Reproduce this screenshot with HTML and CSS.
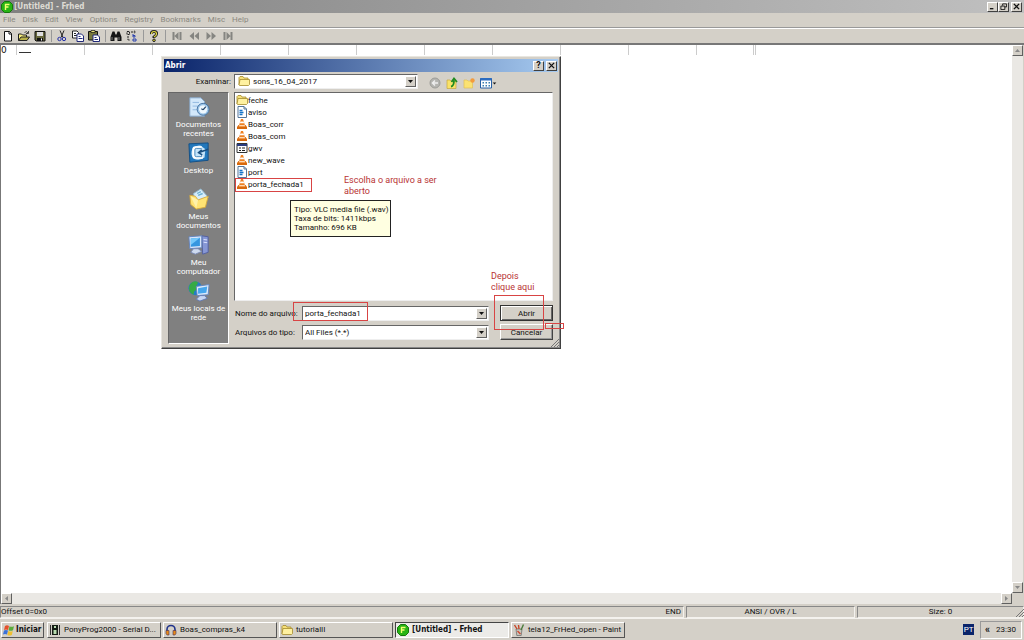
FILE: index.html
```html
<!DOCTYPE html>
<html lang="pt-BR">
<head>
<meta charset="utf-8">
<title>[Untitled] - Frhed</title>
<link rel="stylesheet" href="styles.css">
</head>
<body>
<svg class="defs" aria-hidden="true">
  <symbol id="frhed" viewBox="0 0 12 12"><path d="M3.500 .5h5l3 3v5l-3 3h-5l-3-3v-5z" fill="#28b414" stroke="#14780c"/><path d="M4.500 9V3.500h4M4.500 6h3" stroke="#f4ff70" stroke-width="1.400" fill="none"/></symbol>
  <symbol id="folder" viewBox="0 0 12 12"><path d="M1 10V2.500l1-1h3l1 1.500h4v2" fill="#f5df7a" stroke="#a58a2c" stroke-width=".8"/><path d="M1 10l1-5.500h9.500v5l-1 1H1.500z" fill="#fff1a0" stroke="#a58a2c" stroke-width=".8"/></symbol>
  <symbol id="cone" viewBox="0 0 12 12"><path d="M1 9l1.500-2h7L11 9v2H1z" fill="#d8690c"/><path d="M5 1h2l2.500 8h-7z" fill="#ee8122"/><path d="M4.400 3.500h3.200l.6 1.800H3.800z" fill="#fff"/><path d="M3.300 7h5.400l.4 1.200H2.900z" fill="#fbd9b6"/></symbol>
  <symbol id="textfile" viewBox="0 0 12 12"><path d="M2 .5h6l2.500 2.500v8.500H2z" fill="#fff" stroke="#56779a"/><path d="M8 .5V3h2.500" fill="none" stroke="#56779a"/><path d="M3.500 4.500h3M3.500 6.500h4M3.500 8.500h3" stroke="#1674c8" stroke-width="1.300"/></symbol>
  <symbol id="regfile" viewBox="0 0 12 12"><path d="M1 1.500h10v9H1z" fill="#fff" stroke="#333"/><path d="M1 2h10v2H1z" fill="#2a3c80"/><path d="M3 5.500h2v1H3zm3 0h3v1H6zM3 8h2v1H3zm3 0h3v1H6z" fill="#222"/></symbol>
  <symbol id="down" viewBox="0 0 7 7"><path d="M1 2h5L3.500 5z" fill="currentColor"/></symbol>
  <symbol id="up" viewBox="0 0 7 7"><path d="M1 5h5L3.500 2z" fill="currentColor"/></symbol>
  <symbol id="left" viewBox="0 0 7 7"><path d="M5 1v5L2 3.500z" fill="currentColor"/></symbol>
  <symbol id="right" viewBox="0 0 7 7"><path d="M2 1v5l3-2.500z" fill="currentColor"/></symbol>
  <symbol id="close" viewBox="0 0 8 8"><path d="M1 1l6 6M7 1L1 7" stroke="#111" stroke-width="1.500"/></symbol>
  <symbol id="grip" viewBox="0 0 8 8"><path d="M0 8L8 0M3 8l5-5M6 8l2-2" stroke="#777" fill="none"/></symbol>
</svg>
<div class="app">
  <header class="titlebar">
    <svg class="ic12"><use href="#frhed"/></svg>
    <h1 class="title">[Untitled] - Frhed</h1>
    <button class="capbtn" aria-label="Minimizar"><svg viewBox="0 0 8 8"><path d="M1 6.500h4" stroke="#111" stroke-width="1.500"/></svg></button>
    <button class="capbtn" aria-label="Restaurar"><svg viewBox="0 0 8 8"><path d="M3 3V1h4.500v3.500H5.500M1 3.500h4.500v4H1z" fill="none" stroke="#111"/></svg></button>
    <button class="capbtn last" aria-label="Fechar"><svg><use href="#close"/></svg></button>
  </header>
  <nav class="menubar">
    <button>File</button><button>Disk</button><button>Edit</button><button>View</button><button>Options</button><button>Registry</button><button>Bookmarks</button><button>Misc</button><button>Help</button>
  </nav>
  <div class="toolbar">
    <div class="group">
      <button aria-label="Novo"><svg viewBox="0 0 12 12"><path d="M2.500 1.500h5l2 2v7.500h-7z" fill="#fff" stroke="#111"/><path d="M7 1.500V4h2.500" fill="none" stroke="#111"/></svg></button>
      <button aria-label="Abrir arquivo"><svg viewBox="0 0 12 12"><path d="M.5 10.500V4h3l1 1h4v2" fill="#f6ed7c" stroke="#222"/><path d="M.5 10.500L3 7h8.500L9 10.500z" fill="#b8b048" stroke="#222"/><path d="M6.500 2.500q2-2 3.500.5M10.500 1v2.500H8" fill="none" stroke="#222" stroke-width=".8"/></svg></button>
      <button aria-label="Salvar"><svg viewBox="0 0 12 12"><path d="M1 1.500h10v9.500H2l-1-1z" fill="#68683c" stroke="#111"/><path d="M3 2h6v4H3z" fill="#dedede"/><path d="M3 8h6v3H3z" fill="#111"/><path d="M7 8.500h1v2H7z" fill="#fff"/></svg></button>
    </div>
    <div class="group">
      <button aria-label="Recortar"><svg viewBox="0 0 12 12"><path d="M4 .5l3 7M8 .5l-3 7" stroke="#222"/><circle cx="3.500" cy="9" r="1.700" fill="none" stroke="#2430a8"/><circle cx="8" cy="9" r="1.700" fill="none" stroke="#2430a8"/></svg></button>
      <button aria-label="Copiar"><svg viewBox="0 0 12 12"><path d="M.5 1h4.500l1.500 1.500V8h-6z" fill="#fff" stroke="#222"/><path d="M2 3.500h2M2 5.500h3" stroke="#222"/><path d="M5 4h4.500L11.500 6v5.500H5z" fill="#fff" stroke="#202878"/><path d="M6.500 6.500h2m-2 2h4" stroke="#202878"/></svg></button>
      <button aria-label="Colar"><svg viewBox="0 0 12 12"><path d="M.5 1.500h9V10h-9z" fill="#77773c" stroke="#111"/><path d="M3 .5h4v2H3z" fill="#eee77c" stroke="#111" stroke-width=".7"/><path d="M5 5h4.500l2 2v4.500H5z" fill="#fff" stroke="#202878"/><path d="M6.500 7.500h2m-2 2h3.500" stroke="#202878"/></svg></button>
    </div>
    <div class="group">
      <button aria-label="Localizar"><svg viewBox="0 0 12 12"><path d="M2.500 1.500h2l1 3h1l1-3h2L11.500 7v4H7.500V7.500h-3V11H.5V7z" fill="#151515"/><path d="M2 7v3m7-3v3" stroke="#aaa" stroke-width=".7"/></svg></button>
      <button aria-label="Substituir"><svg viewBox="0 0 12 12"><path d="M1 1.500h2.500v3H1zM5 2h3m0-1.200L9.500 2 8 3.200M2 6v4h2" fill="none" stroke="#222" stroke-dasharray="2 .7"/><path d="M7 4v3M7 5.500h2V7H7M7 9h3v2H7z" stroke="#2940ae" fill="none"/></svg></button>
    </div>
    <div class="group">
      <button aria-label="Ajuda"><svg viewBox="0 0 12 12"><path d="M3.500 4Q3 1.500 6 1.500T8.500 4Q8.500 5.500 6 7v1" fill="none" stroke="#222" stroke-width="3"/><path d="M3.500 4Q3.500 1.500 6 1.500T8.500 4Q8.500 5.500 6 7" fill="none" stroke="#e4dc40" stroke-width="1.200"/><circle cx="6" cy="10.300" r="1.300" fill="#d4c830" stroke="#222"/></svg></button>
    </div>
    <div class="group nav">
      <button aria-label="Primeiro"><svg viewBox="0 0 12 12"><path d="M1.500 2h2v8h-2zM7.500 2v8L3.500 6zM8.500 2h2v8h-2z" fill="#858581"/></svg></button>
      <button aria-label="Anterior"><svg viewBox="0 0 12 12"><path d="M6 2v8L1.500 6zM11 2v8L6.500 6z" fill="#858581"/></svg></button>
      <button aria-label="Próximo"><svg viewBox="0 0 12 12"><path d="M1.500 2v8L6 6zM6.500 2v8L11 6z" fill="#858581"/></svg></button>
      <button aria-label="Último"><svg viewBox="0 0 12 12"><path d="M1.500 2h2v8h-2zM4.500 2v8l4-4zM8.500 2h2v8h-2z" fill="#858581"/></svg></button>
    </div>
  </div>

  <main class="editor">
    <div class="hex">
      <div class="hexrow"><span class="zero">0</span><span class="cell"><i class="caret"></i></span><span class="cell"></span><span class="cell"></span><span class="cell"></span><span class="cell"></span><span class="cell"></span><span class="cell"></span><span class="cell"></span><span class="cell"></span><span class="cell"></span><span class="cell short"></span><span class="end"></span></div>
    </div>
    <div class="vscroll"><button class="sb" aria-label="Rolar para cima"><svg><use href="#up"/></svg></button><button class="sb" aria-label="Rolar para baixo"><svg><use href="#down"/></svg></button></div>
    <div class="hscroll"><button class="sb" aria-label="Rolar para a esquerda"><svg><use href="#left"/></svg></button><button class="sb" aria-label="Rolar para a direita"><svg><use href="#right"/></svg></button></div>
  </main>

  <footer class="status"><span class="pane offset"><span>Offset 0=0x0</span><span>END</span></span><span class="pane">ANSI / OVR / L</span><span class="pane">Size: 0</span><svg class="grip"><use href="#grip"/></svg></footer>

  <div class="taskbar">
    <button class="start"><svg class="ic12" viewBox="0 0 12 12"><path d="M2 2q2-1.500 4 0L5 6Q3 4.800 1 6z" fill="#e6502c"/><path d="M6.500 2.300q2 1 4.500 0L10 6.300q-2.500 1-4.500 0z" fill="#5cac3c"/><path d="M1 6.600q2-1.200 4 0L4 10.500q-2-1.200-4 0z" fill="#3c72d8"/><path d="M5.300 7q2 1 4.500 0l-1 4q-2.500 1-4.500 0z" fill="#f0c030"/></svg>Iniciar</button>
    <button class="task"><svg class="ic12" viewBox="0 0 12 12"><path d="M1.500 1v10M10.500 1v10" stroke="#333"/><path d="M3 1h6v10H3z" fill="#141c14"/><path d="M5 2h2v2H5zM4.500 6h3v4h-3z" fill="#b8dcb0"/></svg><span>PonyProg2000 - Serial D...</span></button>
    <button class="task"><svg class="ic12" viewBox="0 0 12 12"><path d="M2 8V5.500a4 4 0 0 1 8 0V8" fill="none" stroke="#20338c" stroke-width="1.600"/><path d="M1 6.500h3V11H2L1 9.500zM8 6.500h3v3L10 11H8z" fill="#e88a18" stroke="#443060" stroke-width=".6"/></svg><span>Boas_compras_k4</span></button>
    <button class="task"><svg class="ic12"><use href="#folder"/></svg><span>tutorialII</span></button>
    <button class="task active"><svg class="ic12"><use href="#frhed"/></svg><span>[Untitled] - Frhed</span></button>
    <button class="task"><svg class="ic12" viewBox="0 0 12 12"><path d="M3 5h6l-.8 6.500H3.800z" fill="#c8c8bc" stroke="#666" stroke-width=".7"/><path d="M4 5L1.500 1M6 5L5.500 1" stroke="#c84424" stroke-width="1.400"/><path d="M8 6L10.500 .5" stroke="#4a7c3c" stroke-width="1.400"/><path d="M4.500 7l3 3" stroke="#cf4b36" stroke-width="1.500"/></svg><span>tela12_FrHed_open - Paint</span></button>
    <span class="lang">PT</span>
    <div class="tray"><span class="chev">«</span><time>23:30</time></div>
  </div>

  <section class="dialog" role="dialog" aria-labelledby="dlgtitle">
    <div class="dlgbar"><h2 id="dlgtitle">Abrir</h2><button class="capbtn" aria-label="Ajuda da janela"><b>?</b></button><button class="capbtn last" aria-label="Fechar janela"><svg><use href="#close"/></svg></button></div>
    <div class="lookrow">
      <label for="look">Examinar:</label>
      <div class="combo lookcombo"><svg class="ic12"><use href="#folder"/></svg><select id="look"><option>sons_16_04_2017</option></select><span class="arrow"><svg><use href="#down"/></svg></span></div>
      <div class="looktools">
        <button aria-label="Voltar"><svg viewBox="0 0 12 12"><circle cx="6" cy="6" r="5" fill="#b4b4b0" stroke="#9c9c98"/><path d="M9 6H3.500M6 3.500L3.500 6 6 8.500" fill="none" stroke="#eee" stroke-width="1.500"/></svg></button>
        <button aria-label="Um nível acima"><svg viewBox="0 0 12 12"><path d="M1 3h3l1 1h5v7.500H1z" fill="#f9e268" stroke="#c5a83c" stroke-width=".7"/><path d="M5 9.500q3-.5 3-6M5.500 5L8 1.500 11 5" fill="none" stroke="#218c20" stroke-width="1.800"/></svg></button>
        <button aria-label="Nova pasta"><svg viewBox="0 0 12 12"><path d="M1 3h3l1 1h4.500v7H1z" fill="#fbe272" stroke="#e0be58" stroke-width=".7"/><circle cx="9.500" cy="3.500" r="2.200" fill="#f39b3c"/></svg></button>
        <button class="viewbtn" aria-label="Modo de exibição"><svg viewBox="0 0 12 12"><path d="M.5 1.500h11v9.500H.5z" fill="#fff" stroke="#265fa4"/><path d="M.5 1h11v2.500H.5z" fill="#2c6cc0"/><path d="M2.500 5h1.500v1.500H2.500zm3 0H7v1.500H5.500zm3 0H10v1.500H8.500zm-6 3H4v1.500H2.500zm3 0H7v1.500H5.500zm3 0H10v1.500H8.500z" fill="#3b7eb0"/></svg><svg class="tiny"><use href="#down"/></svg></button>
      </div>
    </div>
    <div class="dlgbody">
      <nav class="places">
        <button><svg viewBox="0 0 24 24"><path d="M2 2h12l4 4v16H2z" fill="#d3e8fa" stroke="#84a6cc"/><path d="M5 7h7M5 11h6M5 15h5" stroke="#8db6df"/><circle cx="16.500" cy="14.500" r="6.500" fill="#9ec6e8" stroke="#426f9f"/><circle cx="16.500" cy="14.500" r="4.500" fill="#eff8ff"/><path d="M16.500 15l3-3.500m-3 3.500l-2-1" stroke="#27486c" stroke-width="1.300"/></svg>Documentos<br>recentes</button>
        <button><svg viewBox="0 0 24 24"><path d="M1 2l21-1v19L2 22z" fill="#2277bb" stroke="#104e84"/><path d="M5 7q4-4 9-3l5 4-1 9q-6 4-12 1Q2 13 5 7z" fill="#c4e4fa"/><path d="M15 6H8q-2 0-2 2v7q0 2 2 2h7v-3" fill="none" stroke="#fff" stroke-width="2.500"/><path d="M15 7H9q-1.500 0-1.500 1.500v6Q7.500 16 9 16h6v-2" fill="none" stroke="#3e82b8"/><path d="M22 8l-10 3.500M15 8.500l-3.500 3 4 2.500" fill="none" stroke="#194f80" stroke-width="1.700"/></svg>Desktop</button>
        <button><svg viewBox="0 0 24 24"><path d="M6 6l8-5 8 9-4 8H8z" fill="#d6edfb" stroke="#8eb6ce"/><path d="M10 6l4-2M11 8l5-2" stroke="#6bb0d2" stroke-width="1.500"/><path d="M2 8l6 1 3 4 11-4-3 12-10 2-6-5z" fill="#ffe373" stroke="#d5a83b"/><path d="M3 9l6 13 2-9z" fill="#fff1a9"/></svg>Meus<br>documentos</button>
        <button><svg viewBox="0 0 24 24"><path d="M15 2l7 1v17l-6 2z" fill="#8697d5" stroke="#515e9f"/><path d="M17 6l4 .5M17 9l4 .5" stroke="#dfe6ff"/><path d="M1 3l14-1v13L2 16z" fill="#d8e5fa" stroke="#6082bc"/><path d="M3 5l10-1v9L3 14z" fill="#3696e0"/><path d="M3 5l10-1-10 8z" fill="#75c8fa"/><path d="M6 16h5l4 3-7 3-5-2z" fill="#cedaef" stroke="#7888b4"/></svg>Meu<br>computador</button>
        <button><svg viewBox="0 0 24 24"><circle cx="8" cy="9" r="7.500" fill="#237bc6"/><path d="M2 5q5-6 9-2l-2 4 2 3-4 2-1 4Q-1 13 2 5z" fill="#36aa46"/><path d="M9 7l14-2-1 11-12 1z" fill="#dceafb" stroke="#6184bd"/><path d="M11 9l10-2-1 7-9 1z" fill="#46a7ed"/><path d="M13 17l5 0 3 3-8 3-4-2z" fill="#c7d6f2" stroke="#6179b4"/></svg>Meus locais de<br>rede</button>
      </nav>
      <div>
        <ul class="files">
          <li><svg class="ic12"><use href="#folder"/></svg>feche</li>
          <li><svg class="ic12"><use href="#textfile"/></svg>aviso</li>
          <li><svg class="ic12"><use href="#cone"/></svg>Boas_corr</li>
          <li><svg class="ic12"><use href="#cone"/></svg>Boas_com</li>
          <li><svg class="ic12"><use href="#regfile"/></svg>gwv</li>
          <li><svg class="ic12"><use href="#cone"/></svg>new_wave</li>
          <li><svg class="ic12"><use href="#textfile"/></svg>port</li>
          <li><svg class="ic12"><use href="#cone"/></svg>porta_fechada1</li>
        </ul>
        <form class="fields">
          <label for="fname">Nome do arquivo:</label>
          <div class="combo"><input id="fname" type="text" value="porta_fechada1"><span class="arrow"><svg><use href="#down"/></svg></span></div>
          <button type="button" class="push default">Abrir</button>
          <label for="ftype">Arquivos do tipo:</label>
          <div class="combo"><select id="ftype"><option>All Files (*.*)</option></select><span class="arrow"><svg><use href="#down"/></svg></span></div>
          <button type="button" class="push">Cancelar</button>
        </form>
      </div>
    </div>
    <svg class="grip dlggrip"><use href="#grip"/></svg>
    <div class="tooltip">Tipo: VLC media file (.wav)<br>Taxa de bits: 1411kbps<br>Tamanho: 696 KB</div>
    <p class="note note-file">Escolha o arquivo a ser<br>aberto</p>
    <p class="note note-open">Depois<br>clique aqui</p>
    <i class="mark mark-file"></i><i class="mark mark-name"></i><i class="mark mark-open"></i><i class="mark mark-small"></i>
  </section>
</div>
</body>
</html>
```
FILE: styles.css
```css
* { box-sizing: border-box; }
body {
  margin: 0;
  font: 8px/10px Roboto, "Liberation Sans", sans-serif;
  color: #111;
}
button, input, select {
  font: inherit;
  color: inherit;
  margin: 0;
  padding: 0;
  border: 0;
  background: none;
  border-radius: 0;
}
svg { display: block; flex: none; }
.defs { position: absolute; width: 0; height: 0; }
.ic12 { width: 12px; height: 12px; }

.app {
  position: relative;
  display: flex;
  flex-direction: column;
  height: 100vh;
  background: #d4d0c8;
  overflow: hidden;
}

.titlebar {
  display: flex;
  align-items: center;
  height: 13px;
  padding: 0 2px 0 1px;
  background: linear-gradient(90deg, #808080, #c0c0c0);
}
.title {
  flex: 1;
  margin: 0 0 0 1px;
  font: bold 8px/12px "DejaVu Sans Condensed", "DejaVu Sans", sans-serif;
  color: #dedbd4;
}
.capbtn {
  display: flex;
  align-items: center;
  justify-content: center;
  width: 11px;
  height: 10px;
  background: #d4d0c8;
  border: 1px solid;
  border-color: #fff #404040 #404040 #fff;
}
.capbtn svg { width: 7px; height: 7px; }
.capbtn.last { margin-left: 2px; }

.menubar {
  display: flex;
  align-items: center;
  gap: 7px;
  height: 15px;
  padding: 0 3px;
  color: #8a8880;
  border-bottom: 1px solid #999;
}
.toolbar {
  display: flex;
  align-items: center;
  height: 17px;
  padding-left: 2px;
  border-top: 1px solid #fff;
  border-bottom: 2px solid #777;
}
.group { display: flex; gap: 4px; }
.group + .group {
  margin-left: 5px;
  padding-left: 4px;
  border-left: 1px solid #999;
}
.group svg { width: 12px; height: 12px; }
.group.nav { gap: 5px; padding-left: 5px; }

.editor {
  flex: 1;
  min-height: 0;
  display: grid;
  grid-template: 1fr 11px / 1fr 11px;
  padding-right: 1px;
  border-left: 1px solid #777;
}
.hex { background: #fff; }
.hexrow {
  display: flex;
  height: 10px;
  font: 9px/10px "DejaVu Sans", sans-serif;
}
.zero { width: 15px; }
.cell {
  flex: 0 0 68px;
  border-left: 1px solid #ccc;
}
.cell.short { flex-basis: 57px; }
.caret {
  display: block;
  width: 12px;
  height: 8px;
  margin-left: 2px;
  border-bottom: 1px solid #333;
}
.end {
  width: 3px;
  border: 1px solid #ccc;
  border-width: 0 1px;
}
.vscroll, .hscroll {
  display: flex;
  justify-content: space-between;
  background: #eae8e4;
}
.vscroll { flex-direction: column; }
.sb, .arrow {
  display: flex;
  flex: none;
  align-items: center;
  justify-content: center;
  width: 11px;
  height: 11px;
  background: #d4d0c8;
  border: 1px solid;
  border-color: #fff #606060 #606060 #fff;
}
.sb { color: #888; }
.sb svg, .arrow svg { width: 7px; height: 7px; }

.status {
  display: grid;
  grid-template-columns: 684fr 169fr 167fr;
  gap: 2px;
  position: relative;
  height: 15px;
  padding-top: 2px;
  border-bottom: 1px solid #f4f2ee;
}
.pane {
  border: 1px solid;
  border-color: #888 #f4f2ee #f4f2ee #888;
  text-align: center;
  line-height: 10px;
}
.offset { display: flex; justify-content: space-between; padding-right: 2px; }
.grip { width: 8px; height: 8px; position: absolute; right: 0; bottom: 1px; }

.taskbar {
  display: flex;
  align-items: center;
  gap: 2px;
  height: 21px;
  padding: 0 2px 0 1px;
}
.start, .task {
  display: flex;
  align-items: center;
  gap: 3px;
  height: 16px;
  background: #d4d0c8;
  border: 1px solid;
  border-color: #fff #555 #555 #fff;
}
.start {
  width: 43px;
  gap: 1px;
  margin-right: 1px;
  padding-left: 1px;
  font: bold 8px/10px "DejaVu Sans Condensed", "DejaVu Sans", sans-serif;
}
.task { flex: 0 1 114px; padding-left: 1px; white-space: nowrap; }
.task.active {
  background: #ecebe8;
  border-color: #444 #fff #fff #444;
  font: bold 8px/10px "DejaVu Sans Condensed", "DejaVu Sans", sans-serif;
}
.lang {
  margin-left: auto;
  width: 11px;
  background: #0a246a;
  color: #fff;
  text-align: center;
  line-height: 11px;
}
.tray {
  display: flex;
  align-items: center;
  gap: 6px;
  height: 18px;
  margin-left: 4px;
  padding: 0 5px 0 4px;
  border: 1px solid;
  border-color: #999 #fff #fff #999;
}
.chev { font-size: 10px; font-weight: bold; }

.dialog {
  position: absolute;
  left: 161px;
  top: 56px;
  width: 400px;
  padding: 2px 2px 4px;
  background: #d4d0c8;
  border: 1px solid;
  border-color: #e8e6e0 #404040 #404040 #e8e6e0;
  box-shadow: inset -1px -1px #888;
  line-height: 9px;
}
.dlgbar {
  display: flex;
  align-items: center;
  height: 13px;
  padding: 0 1px;
  background: linear-gradient(90deg, #0a246a, #a6caf0);
  color: #fff;
}
.dlgbar h2 { flex: 1; margin: 0; font: bold 8px/12px "DejaVu Sans Condensed", "DejaVu Sans", sans-serif; }
.dlgbar b { color: #111; font-size: 9px; }
.lookrow {
  display: flex;
  align-items: center;
  height: 20px;
  padding-bottom: 2px;
}
.lookrow > label { width: 67px; text-align: right; }
.combo {
  display: flex;
  align-items: center;
  height: 15px;
  padding: 1px;
  background: #fff;
  border: 1px solid;
  border-color: #666 #eee #eee #666;
}
.combo input, .combo select { flex: 1; min-width: 0; height: 11px; padding-left: 1px; appearance: none; outline: 0; }
.lookcombo { width: 184px; margin-left: 3px; padding-left: 3px; }
.lookcombo select { padding-left: 3px; }
.looktools { display: flex; gap: 5px; margin: 4px 0 0 11px; }
.looktools svg { width: 12px; height: 12px; }
.viewbtn { display: flex; align-items: center; }
.looktools .tiny { width: 5px; height: 5px; }

.dlgbody {
  display: grid;
  grid-template-columns: 61px 1fr;
  gap: 5px;
  padding: 0 5px 0 4px;
}
.places {
  display: grid;
  grid-auto-rows: 46px;
  padding-top: 3px;
  background: #808080;
  border: 1px solid;
  border-color: #666 #fff #fff #666;
  color: #fff;
}
.places button {
  display: flex;
  flex-direction: column;
  align-items: center;
  gap: 2px;
  white-space: nowrap;
}
.places svg { width: 22px; height: 22px; }
.files {
  height: 209px;
  margin: 0;
  padding: 1px;
  list-style: none;
  background: #fff;
  border: 1px solid;
  border-color: #666 #eee #eee #666;
}
.files li { display: flex; align-items: center; height: 12px; }
.fields {
  display: grid;
  grid-template-columns: 68px 187px 1fr;
  row-gap: 3px;
  align-items: center;
  padding: 4px 0;
}
.fields label { padding-left: 1px; white-space: nowrap; }
.push {
  justify-self: end;
  width: 53px;
  height: 16px;
  border: 1px solid;
  border-color: #fff #444 #444 #fff;
  box-shadow: inset -1px -1px #999;
}
.push.default { border-color: #333; box-shadow: inset 1px 1px #fff, inset -1px -1px #666; }
.dlggrip { right: 1px; bottom: 1px; }

.tooltip {
  position: absolute;
  left: 128px;
  top: 143px;
  padding: 4px 1px 4px 3px;
  background: #ffffe1;
  border: 1px solid #222;
  white-space: nowrap;
}
.note {
  position: absolute;
  margin: 0;
  font: 9px/11px Roboto, "Liberation Sans", sans-serif;
  color: #b83434;
  white-space: nowrap;
}
.note-file { left: 182px; top: 118px; }
.note-open { left: 329px; top: 214px; }
.mark { position: absolute; border: 1px solid #d84444; }
.mark-file { left: 73px; top: 121px; width: 77px; height: 14px; }
.mark-name { left: 131px; top: 245px; width: 75px; height: 19px; }
.mark-open { left: 332px; top: 238px; width: 50px; height: 35px; }
.mark-small { left: 383px; top: 266px; width: 19px; height: 6px; }
```
